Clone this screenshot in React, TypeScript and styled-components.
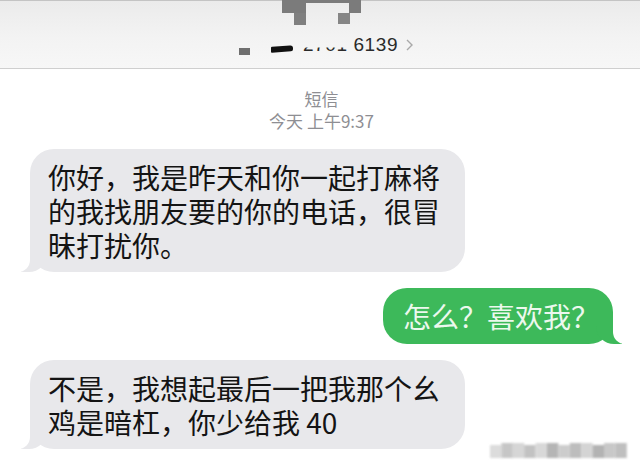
import styled, { createGlobalStyle } from "styled-components"

const GlobalStyle = createGlobalStyle`
*{
    margin: 0;
    padding: 0;
    box-sizing: border-box;
}
body{
    font-family: "PingFang SC", "Noto Sans CJK SC", "Noto Sans", sans-serif;
    background: #fff;
}
`

const Screen = styled.div`
position: relative;
width: 640px;
height: 472px;
overflow: hidden;
background: #fff;
`

const Header = styled.header`
height: 69px;
border-top: 1px solid #c4c4c4;
border-bottom: 1px solid #cfcfcf;
background: linear-gradient(180deg, #ebebeb 0%, #f3f3f3 55%, #f7f7f7 100%);
display: flex;
flex-direction: column;
align-items: center;
`

const Avatar = styled.svg`
display: block;
margin-top: -1px;
margin-left: 3px;
`

const ContactRow = styled.div`
display: flex;
align-items: flex-start;
margin-top: 11px;
padding-left: 12px;
height: 22px;
`

const Redact = styled.span<{ $w: number; $h: number; $top: number; $dark?: boolean; $gap: number }>`
display: block;
width: ${p => p.$w}px;
height: ${p => p.$h}px;
margin-top: ${p => p.$top}px;
margin-right: ${p => p.$gap}px;
background: ${p => (p.$dark ? "#111" : "#6f6f6f")};
border-radius: ${p => (p.$dark ? "1px 3px 2px 1px" : "0")};
transform: ${p => (p.$dark ? "skewY(-4deg)" : "none")};
`

const Number = styled.span`
font-family: "Liberation Sans", Arial, sans-serif;
font-size: 19px;
line-height: 20px;
letter-spacing: 0.6px;
color: #2a2a2a;
margin-top: -1px;
`

const Clipped = styled.span`
display: inline-block;
clip-path: inset(62% 0 0 0);
`

const Chevron = styled.svg`
display: block;
margin-left: 8px;
margin-top: 3px;
`

const Thread = styled.main`
display: flex;
flex-direction: column;
padding: 19px 27px 0 30px;
`

const Stamp = styled.div`
display: flex;
flex-direction: column;
align-items: center;
color: #8e8e93;
font-size: 17px;
line-height: 22px;
margin-bottom: 17px;
`

const Bubble = styled.div<{ $me?: boolean }>`
position: relative;
align-self: ${p => (p.$me ? "flex-end" : "flex-start")};
background: ${p => (p.$me ? "#3db95a" : "#e8e8eb")};
color: ${p => (p.$me ? "#ecf8ee" : "#141414")};
font-size: 28px;
line-height: 34px;
border-radius: 24px;
padding: ${p => (p.$me ? "11px 14px 11px 20px" : "11px 25px 10px 18px")};
margin-bottom: 16px;
white-space: nowrap;

&::before {
    content: "";
    position: absolute;
    bottom: 0;
    ${p => (p.$me ? "right: -9px;" : "left: -9px;")}
    width: 26px;
    height: 24px;
    background: ${p => (p.$me ? "#3db95a" : "#e8e8eb")};
    ${p => (p.$me ? "border-bottom-left-radius: 18px;" : "border-bottom-right-radius: 18px;")}
}
&::after {
    content: "";
    position: absolute;
    bottom: 0;
    ${p => (p.$me ? "right: -13px;" : "left: -13px;")}
    width: 13px;
    height: 25px;
    background: #fff;
    ${p => (p.$me ? "border-bottom-left-radius: 12px;" : "border-bottom-right-radius: 12px;")}
}
`

const Text = styled.span`
position: relative;
z-index: 1;
`

const Watermark = styled.svg`
position: absolute;
right: 13px;
bottom: 14px;
filter: blur(1.2px);
opacity: 0.85;
`

const marks = ["#d6d6d6", "#bdbdbd", "#cfcfcf", "#b8b8b8", "#d2d2d2", "#a9a9a9", "#c4c4c4", "#b2b2b2", "#cdcdcd", "#a6a6a6", "#bfbfbf", "#b4b4b4"]

const App = () => {
  return (
    <>
      <GlobalStyle />
      <Screen>
        <Header>
          <Avatar width="79" height="25" viewBox="0 0 79 25">
            <rect x="0" y="0" width="79" height="3" fill="#7b7b7b" />
            <rect x="0" y="0" width="24" height="13" fill="#7b7b7b" />
            <rect x="12" y="13" width="12" height="12" fill="#7f7f7f" />
            <rect x="67" y="0" width="12" height="13" fill="#7b7b7b" />
            <rect x="56" y="13" width="12" height="11" fill="#858585" />
          </Avatar>
          <ContactRow>
            <Redact $w={11} $h={7} $top={12} $gap={21} />
            <Redact $w={22} $h={6} $top={10} $gap={10} $dark />
            <Number>
              <Clipped>2701</Clipped> 6139
            </Number>
            <Chevron width="7" height="12" viewBox="0 0 7 12">
              <path d="M1 1 L6 6 L1 11" fill="none" stroke="#a9a9a9" strokeWidth="1.4" />
            </Chevron>
          </ContactRow>
        </Header>
        <Thread>
          <Stamp>
            <span>短信</span>
            <span>今天 上午9:37</span>
          </Stamp>
          <Bubble>
            <Text>
              你好，我是昨天和你一起打麻将<br />
              的我找朋友要的你的电话，很冒<br />
              昧打扰你。
            </Text>
          </Bubble>
          <Bubble $me>
            <Text>怎么？喜欢我？</Text>
          </Bubble>
          <Bubble>
            <Text>
              不是，我想起最后一把我那个幺<br />
              鸡是暗杠，你少给我 40
            </Text>
          </Bubble>
        </Thread>
        <Watermark width="137" height="15" viewBox="0 0 137 15">
          {marks.map((c, i) => (
            <rect key={i} x={i * 11.4} y={i % 3 === 0 ? 2 : 0} width="11.4" height={i % 3 === 0 ? 13 : 15} fill={c} />
          ))}
        </Watermark>
      </Screen>
    </>
  )
}

export default App
